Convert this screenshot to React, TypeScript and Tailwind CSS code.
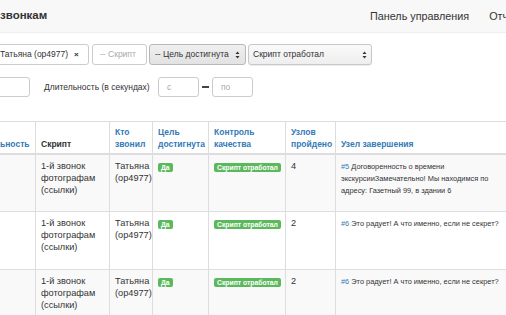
import React from "react";

const rows = [
  {
    node: "#5",
    text: "Договоренность о времени экскурсииЗамечательно! Мы находимся по адресу: Газетный 99, в здании 6",
    passed: "4",
    bg: "bg-[#f9f9f9]",
  },
  { node: "#6", text: "Это радует! А что именно, если не секрет?", passed: "2", bg: "bg-white" },
  { node: "#6", text: "Это радует! А что именно, если не секрет?", passed: "2", bg: "bg-[#f9f9f9]" },
];

function UpDown() {
  return (
    <svg width="5" height="8" viewBox="0 0 5 8" className="shrink-0">
      <path d="M2.5 0.5 L4.5 3 H0.5 Z M2.5 7.5 L4.5 5 H0.5 Z" fill="#333" />
    </svg>
  );
}

function Badge({ children }: { children: React.ReactNode }) {
  return (
    <span className="inline-block bg-[#5cb85c] text-white font-bold text-[6.8px] leading-[9px] px-[3px] rounded-[2px] whitespace-nowrap">
      {children}
    </span>
  );
}

export default function App() {
  return (
    <div className="w-[506px] h-[315px] overflow-hidden bg-white text-[#333] font-['Liberation_Sans',Arial,sans-serif]">
      {/* Navbar */}
      <nav className="h-[33px] bg-[#f8f8f8] border-b border-[#eeeeee] flex items-center whitespace-nowrap">
        <div className="w-[370px] shrink-0 text-[11.5px] font-bold text-[#333]">звонкам</div>
        <div className="flex gap-[20px] text-[10.8px] text-[#333]">
          <span>Панель управления</span>
          <span>Отчеты</span>
        </div>
      </nav>

      {/* Filters */}
      <div className="mt-[11px] flex items-center h-[21px] text-[8.5px] whitespace-nowrap">
        <div className="-ml-[10px] w-[99px] h-[21px] border border-[#ccc] rounded-[3px] flex items-center pl-[9px] gap-[6px] shrink-0">
          <span>Татьяна (op4977)</span>
          <span className="text-[8px] font-bold">×</span>
        </div>
        <div className="ml-[3px] w-[55px] h-[21px] border border-[#ccc] rounded-[3px] flex items-center pl-[7px] text-[#aaa] shrink-0">
          -- Скрипт
        </div>
        <div className="ml-[2px] w-[97px] h-[21px] border border-[#b8b8b8] rounded-[3px] bg-gradient-to-b from-[#f0f0f0] to-[#e2e2e2] flex items-center justify-between px-[5px] shrink-0">
          <span>-- Цель достигнута</span>
          <UpDown />
        </div>
        <div className="ml-[2px] w-[124px] h-[21px] border border-[#c8c8c8] rounded-[3px] bg-gradient-to-b from-[#fafafa] to-[#eeeeee] shadow-[0_1px_1px_rgba(0,0,0,0.08)] flex items-center justify-between px-[4px] shrink-0">
          <span>Скрипт отработал</span>
          <UpDown />
        </div>
      </div>

      <div className="mt-[12px] flex items-center h-[20px] text-[8.5px] whitespace-nowrap">
        <div className="-ml-[10px] w-[40px] h-[20px] border border-[#ccc] rounded-[3px] shrink-0" />
        <span className="ml-[14px] w-[114px] shrink-0">Длительность (в секундах)</span>
        <div className="w-[41px] h-[20px] border border-[#ccc] rounded-[3px] flex items-center pl-[8px] text-[#aaa] shrink-0">
          с
        </div>
        <div className="w-[13px] flex justify-center shrink-0">
          <div className="w-[7px] h-[1.5px] bg-[#444]" />
        </div>
        <div className="w-[41px] h-[20px] border border-[#ccc] rounded-[3px] flex items-center pl-[8px] text-[#aaa] shrink-0">
          по
        </div>
      </div>

      {/* Table */}
      <table className="mt-[24px] -ml-[37px] table-fixed border-collapse w-[600px] text-[9.2px]">
        <colgroup>
          <col className="w-[72px]" />
          <col className="w-[74px]" />
          <col className="w-[43px]" />
          <col className="w-[56px]" />
          <col className="w-[77px]" />
          <col className="w-[50px]" />
          <col className="w-[228px]" />
        </colgroup>
        <thead>
          <tr className="h-[32px] border-t border-[#ddd] border-b-2 border-b-[#ddd]">
            {[
              { t: "Длительность", blue: true },
              { t: "Скрипт", blue: false },
              { t: "Кто звонил", blue: true },
              { t: "Цель достигнута", blue: true },
              { t: "Контроль качества", blue: true },
              { t: "Узлов пройдено", blue: true },
              { t: "Узел завершения", blue: true },
            ].map((h) => (
              <th
                key={h.t}
                className={`text-left align-bottom font-bold text-[8.5px] leading-[12px] px-[5px] pb-[3px] border-l border-[#ddd] ${
                  h.blue ? "text-[#337ab7]" : "text-[#333]"
                }`}
              >
                {h.t}
              </th>
            ))}
          </tr>
        </thead>
        <tbody>
          {rows.map((r, i) => (
            <tr key={i} className={`h-[58px] border-b border-[#ddd] ${r.bg}`}>
              <td className="border-l border-[#ddd]" />
              <td className="align-top px-[5px] pt-[5px] leading-[12px] border-l border-[#ddd]">
                1-й звонок фотографам (ссылки)
              </td>
              <td className="align-top px-[5px] pt-[5px] leading-[12px] border-l border-[#ddd]">
                Татьяна (op4977)
              </td>
              <td className="align-top px-[5px] pt-[6px] leading-[12px] border-l border-[#ddd]">
                <Badge>Да</Badge>
              </td>
              <td className="align-top px-[5px] pt-[6px] leading-[12px] border-l border-[#ddd]">
                <Badge>Скрипт отработал</Badge>
              </td>
              <td className="align-top px-[5px] pt-[5px] leading-[12px] border-l border-[#ddd]">
                {r.passed}
              </td>
              <td className="align-top px-[5px] pt-[6px] leading-[12px] text-[7.4px] border-l border-[#ddd]">
                <div className="w-[158px]">
                  <span className="text-[#337ab7]">{r.node}</span> {r.text}
                </div>
              </td>
            </tr>
          ))}
        </tbody>
      </table>
    </div>
  );
}
